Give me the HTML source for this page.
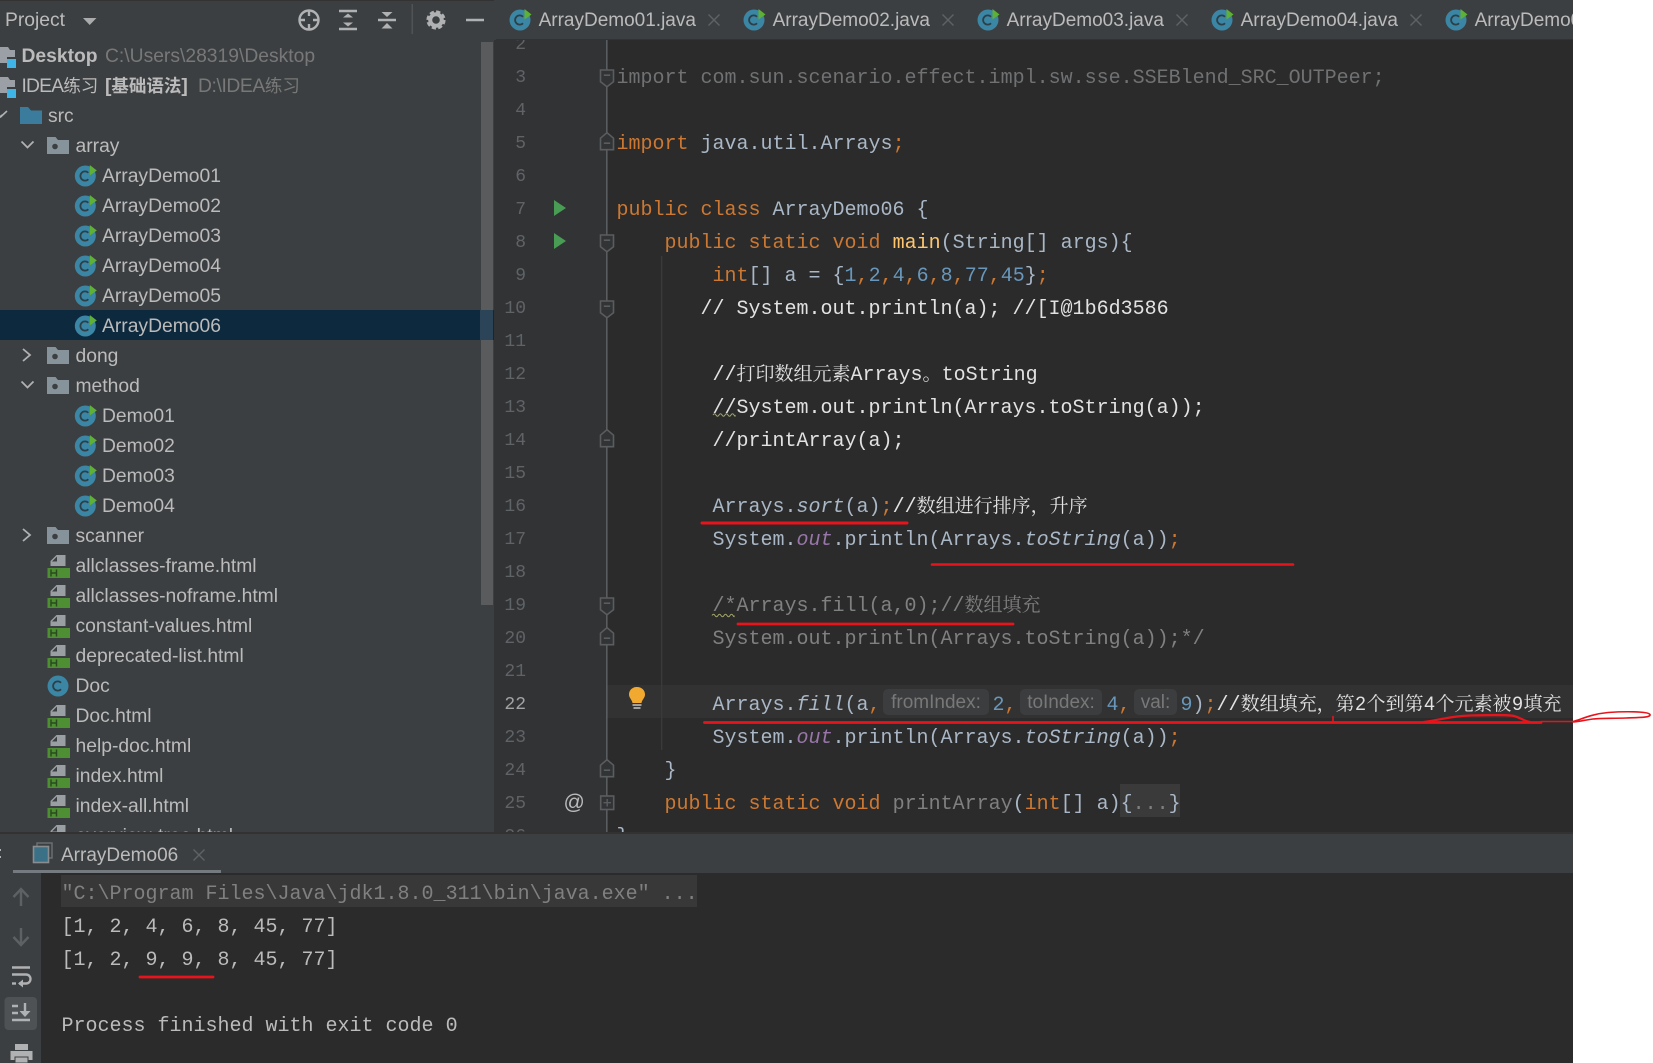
<!DOCTYPE html>
<html lang="zh">
<head>
<meta charset="utf-8">
<title>ArrayDemo06</title>
<style>
html,body{margin:0;padding:0;background:#fff;}
body{width:1653px;height:1063px;overflow:hidden;position:relative;font-family:"Liberation Sans","Noto Sans CJK SC",sans-serif;}
.abs{position:absolute;}
svg.abs{left:0;top:0;}
/* tree */
#tree{left:0;top:0;width:496px;height:832px;background:#3c3f41;overflow:hidden;position:absolute;}
.r{position:absolute;height:30px;line-height:30px;font-size:19.3px;color:#bbb;white-space:nowrap;margin-top:2px;}
.r b{font-weight:700;}
.r i{font-style:normal;color:#787878;}
.r u{text-decoration:none;font-size:17.5px;line-height:0;}
.sel{position:absolute;left:0;top:310px;width:494px;height:30px;background:#0d293e;}
/* tabs */
#tabbar{left:496px;top:0;width:1077px;height:39px;background:#3c3f41;overflow:hidden;position:absolute;border-bottom:1px solid #323232;}
.tab{position:absolute;top:0;height:40px;line-height:42px;font-size:19px;color:#bbb;white-space:nowrap;}
/* editor */
#editor{position:absolute;left:494px;top:40px;width:1079px;height:792px;background:#2b2b2b;}
#gutter{position:absolute;left:0;top:0;width:113px;height:792px;background:#313335;}
#caret{position:absolute;left:113px;top:645px;width:966px;height:33px;background:#323232;}
#code{position:absolute;left:0;top:0;width:1573px;height:1063px;clip-path:inset(40px 0 231px 0);font-family:"Liberation Mono","Noto Serif CJK SC",monospace;font-size:20px;}
.l{position:absolute;height:33px;line-height:33px;white-space:pre;color:#a9b7c6;margin-top:2px;}
.n{position:absolute;left:490px;width:36px;text-align:right;height:33px;line-height:33px;font-size:18px;color:#606366;margin-top:2px;}
.k{color:#cc7832}.o{color:#cc7832}.d{color:#6897bb}.m{color:#ffc66d}.v{color:#9876aa;font-style:italic}.it{font-style:italic}
.w{color:#e2e2e2}.g{color:#808080}.g2{color:#6f7173}
.cj{font-family:"Noto Serif CJK SC","Liberation Mono",serif;font-size:19px;line-height:0;}
.dg{font-family:"Liberation Sans",sans-serif;font-size:19px;line-height:0;padding:0 .7px;}
.h{position:absolute;top:689px;height:26px;line-height:27px;background:#3b3d3e;border-radius:5px;color:#787878;font-family:"Liberation Sans",sans-serif;font-size:19px;text-align:center;}
.fd{position:absolute;left:1120px;top:784px;width:60px;height:33px;background:#3a3a3a;}
/* bottom */
#bottom{position:absolute;left:0;top:832px;width:1573px;height:231px;background:#2b2b2b;}
#sep{position:absolute;left:0;top:0;width:1573px;height:2px;background:#323232;}
#rhead{position:absolute;left:0;top:2px;width:1573px;height:39px;background:#3c3f41;}
#rleft{position:absolute;left:0;top:41px;width:41px;height:190px;background:#3c3f41;}
.c{position:absolute;left:61.5px;height:33px;line-height:33px;font-family:"Liberation Mono",monospace;font-size:20px;white-space:pre;color:#bbb;margin-top:2px;}
</style>
</head>
<body>

<div id="tree">
  <div class="r" style="left:5px;top:4px">Project</div>
  <div class="r" style="left:21.5px;top:40px"><b>Desktop</b></div>
  <div class="r" style="left:105px;top:40px"><i>C:\Users\28319\Desktop</i></div>
  <div class="r" style="left:21.5px;top:70px"><span style="letter-spacing:-.8px">IDEA</span><u>练习</u></div>
  <div class="r" style="left:105px;top:70px"><b>[<u>基础语法</u>]</b></div>
  <div class="r" style="left:198px;top:70px"><i><span style="letter-spacing:-.4px">D:\IDEA</span><u>练习</u></i></div>
  <div class="r" style="left:48px;top:100px">src</div>
  <div class="r" style="left:75.5px;top:130px">array</div>
  <div class="sel"></div>
  <div class="r" style="left:102px;top:160px">ArrayDemo01</div>
  <div class="r" style="left:102px;top:190px">ArrayDemo02</div>
  <div class="r" style="left:102px;top:220px">ArrayDemo03</div>
  <div class="r" style="left:102px;top:250px">ArrayDemo04</div>
  <div class="r" style="left:102px;top:280px">ArrayDemo05</div>
  <div class="r" style="left:102px;top:310px">ArrayDemo06</div>
  <div class="r" style="left:75.5px;top:340px">dong</div>
  <div class="r" style="left:75.5px;top:370px">method</div>
  <div class="r" style="left:102px;top:400px">Demo01</div>
  <div class="r" style="left:102px;top:430px">Demo02</div>
  <div class="r" style="left:102px;top:460px">Demo03</div>
  <div class="r" style="left:102px;top:490px">Demo04</div>
  <div class="r" style="left:75.5px;top:520px">scanner</div>
  <div class="r" style="left:75.5px;top:550px">allclasses-frame.html</div>
  <div class="r" style="left:75.5px;top:580px">allclasses-noframe.html</div>
  <div class="r" style="left:75.5px;top:610px">constant-values.html</div>
  <div class="r" style="left:75.5px;top:640px">deprecated-list.html</div>
  <div class="r" style="left:75.5px;top:670px">Doc</div>
  <div class="r" style="left:75.5px;top:700px">Doc.html</div>
  <div class="r" style="left:75.5px;top:730px">help-doc.html</div>
  <div class="r" style="left:75.5px;top:760px">index.html</div>
  <div class="r" style="left:75.5px;top:790px">index-all.html</div>
  <div class="r" style="left:75.5px;top:820px">overview-tree.html</div>
</div>

<div id="editor"><div id="gutter"></div><div id="caret"></div></div>

<div id="tabbar">
  <div class="tab" style="left:42.6px">ArrayDemo01.java</div>
  <div class="tab" style="left:276.6px">ArrayDemo02.java</div>
  <div class="tab" style="left:510.6px">ArrayDemo03.java</div>
  <div class="tab" style="left:744.6px">ArrayDemo04.java</div>
  <div class="tab" style="left:978.6px">ArrayDemo05.java</div>
</div>

<div id="code">
  <div class="n" style="top:27px">2</div>
  <div class="n" style="top:60px">3</div>
  <div class="n" style="top:93px">4</div>
  <div class="n" style="top:126px">5</div>
  <div class="n" style="top:159px">6</div>
  <div class="n" style="top:192px">7</div>
  <div class="n" style="top:225px">8</div>
  <div class="n" style="top:258px">9</div>
  <div class="n" style="top:291px">10</div>
  <div class="n" style="top:324px">11</div>
  <div class="n" style="top:357px">12</div>
  <div class="n" style="top:390px">13</div>
  <div class="n" style="top:423px">14</div>
  <div class="n" style="top:456px">15</div>
  <div class="n" style="top:489px">16</div>
  <div class="n" style="top:522px">17</div>
  <div class="n" style="top:555px">18</div>
  <div class="n" style="top:588px">19</div>
  <div class="n" style="top:621px">20</div>
  <div class="n" style="top:654px">21</div>
  <div class="n" style="top:687px;color:#a4a3a3">22</div>
  <div class="n" style="top:720px">23</div>
  <div class="n" style="top:753px">24</div>
  <div class="n" style="top:786px">25</div>
  <div class="n" style="top:819px">26</div>

  <div class="fd"></div>
  <div class="h" style="left:883px;width:106px">fromIndex:</div>
  <div class="h" style="left:1020px;width:82px">toIndex:</div>
  <div class="h" style="left:1134px;width:43px">val:</div>

  <div class="l g2" style="left:616.5px;top:60px">import com.sun.scenario.effect.impl.sw.sse.SSEBlend_SRC_OUTPeer;</div>
  <div class="l" style="left:616.5px;top:126px"><span class="k">import</span> java.util.Arrays<span class="o">;</span></div>
  <div class="l" style="left:616.5px;top:192px"><span class="k">public class</span> ArrayDemo06 {</div>
  <div class="l" style="left:664.5px;top:225px"><span class="k">public static void</span> <span class="m">main</span>(String[] args){</div>
  <div class="l" style="left:712.5px;top:258px"><span class="k">int</span>[] a = {<span class="d">1</span><span class="o">,</span><span class="d">2</span><span class="o">,</span><span class="d">4</span><span class="o">,</span><span class="d">6</span><span class="o">,</span><span class="d">8</span><span class="o">,</span><span class="d">77</span><span class="o">,</span><span class="d">45</span>}<span class="o">;</span></div>
  <div class="l w" style="left:700.5px;top:291px">// System.out.println(a); //[I@1b6d3586</div>
  <div class="l w" style="left:712.5px;top:357px">//<span class="cj">打印数组元素</span>Arrays<span class="cj">。</span>toString</div>
  <div class="l w" style="left:712.5px;top:390px">//System.out.println(Arrays.toString(a));</div>
  <div class="l w" style="left:712.5px;top:423px">//printArray(a);</div>
  <div class="l" style="left:712.5px;top:489px">Arrays.<span class="it">sort</span>(a)<span class="o">;</span><span class="w">//<span class="cj">数组进行排序，升序</span></span></div>
  <div class="l" style="left:712.5px;top:522px">System.<span class="v">out</span>.println(Arrays.<span class="it">toString</span>(a))<span class="o">;</span></div>
  <div class="l g" style="left:712.5px;top:588px">/*Arrays.fill(a,0);//<span class="cj">数组填充</span></div>
  <div class="l g" style="left:712.5px;top:621px">System.out.println(Arrays.toString(a));*/</div>
  <div class="l" style="left:712.5px;top:687px">Arrays.<span class="it">fill</span>(a<span class="o">,</span></div>
  <div class="l" style="left:992.5px;top:687px"><span class="d">2</span><span class="o">,</span></div>
  <div class="l" style="left:1106.5px;top:687px"><span class="d">4</span><span class="o">,</span></div>
  <div class="l" style="left:1180.5px;top:687px"><span class="d">9</span>)<span class="o">;</span><span class="w">//<span class="cj">数组填充，第<span class="dg">2</span>个到第<span class="dg">4</span>个元素被<span class="dg">9</span>填充</span></span></div>
  <div class="l" style="left:712.5px;top:720px">System.<span class="v">out</span>.println(Arrays.<span class="it">toString</span>(a))<span class="o">;</span></div>
  <div class="l" style="left:664.5px;top:753px">}</div>
  <div class="l" style="left:664.5px;top:786px"><span class="k">public static void</span> <span class="g">printArray</span>(<span class="k">int</span>[] a){<span class="g">...</span>}</div>
  <div class="l" style="left:616.5px;top:819px">}</div>
</div>

<svg class="abs" width="1653" height="1063" viewBox="0 0 1653 1063" style="position:absolute">
  <defs>
    <g id="cls">
      <circle r="10.5" fill="#3b86a5"/>
      <path d="M3 -3.2A4.6 4.6 0 1 0 3 3.2" fill="none" stroke="#2d3f47" stroke-width="1.8"/>
    </g>
    <g id="run">
      <path d="M4.5 -11L11.5 -5.5L4.5 -0.5Z" fill="#5fb135"/>
    </g>
    <g id="pkg">
      <path d="M0 -8.5H8.5L11 -5.5H22V8.5H0Z" fill="#87939a"/>
      <circle cx="8" cy="1" r="2.8" fill="#3c3f41"/>
    </g>
    <g id="htm">
      <path d="M3 1V-4L9 -10H18V1Z" fill="#9a9fa3"/>
      <path d="M4.5 -3.5L9.5 -8.5V-3.5Z" fill="#3c3f41"/>
      <rect x="0" y="3" width="22.5" height="10" fill="#4f8f33"/>
      <path d="M3.5 4.5V11.5M9 4.5V11.5M3.5 8H9" stroke="#2a4a1f" stroke-width="1.5" fill="none"/>
    </g>
    <g id="fs">
      <path d="M-6.5 -6.7H6.5V5L0 10L-6.5 5Z" fill="#313335" stroke="#5a5d5f" stroke-width="1.6"/>
      <path d="M-3.2 -1.5H3.2" stroke="#5a5d5f" stroke-width="1.6"/>
    </g>
    <g id="fe">
      <path d="M-6.5 7H6.5V-4.5L0 -10L-6.5 -4.5Z" fill="#313335" stroke="#5a5d5f" stroke-width="1.6"/>
      <path d="M-3.2 0.5H3.2" stroke="#5a5d5f" stroke-width="1.6"/>
    </g>
    <path id="x" d="M-5.5 -5.5L5.5 5.5M5.5 -5.5L-5.5 5.5" stroke="#5f6264" stroke-width="1.4" fill="none"/>
  </defs>

  <!-- tree scrollbar -->
  <rect x="481" y="42" width="12" height="563" fill="#595b5d"/>
  <rect x="480" y="310" width="13" height="30" fill="#2c4457"/>

  <!-- header icons -->
  <rect x="0" y="0" width="494" height="1" fill="#333"/>
  <path d="M83 18H96.5L89.7 25Z" fill="#a9abad"/>
  <g fill="none" stroke="#afb1b3" stroke-width="2.4">
    <circle cx="309" cy="20" r="9.5"/>
    <path d="M309 10V16M309 24V30M299 20H305M313 20H319"/>
    <path d="M339 11H357M339 29H357M378 20H396" stroke-width="2.6"/>
    <path d="M466 20H484" stroke-width="2.6"/>
  </g>
  <path d="M348 13.5L353 17.5H343ZM348 26.5L353 22.5H343ZM387 17L381.5 12H392.5ZM387 23L392.5 28.5H381.5Z" fill="#afb1b3"/>
  <rect x="411.5" y="4" width="1.5" height="30" fill="#505254"/>
  <circle cx="436" cy="20" r="5.8" fill="none" stroke="#afb1b3" stroke-width="4"/>
  <circle cx="436" cy="20" r="8.3" fill="none" stroke="#afb1b3" stroke-width="2.6" stroke-dasharray="4.2 2.3"/>

  <!-- project icons -->
  <path d="M0 47H8L10 50H15V57H7V63H0Z" fill="#9aa0a5"/><rect x="7" y="59" width="9" height="9" fill="#3fb4e6"/>
  <path d="M0 77H8L10 80H15V87H7V93H0Z" fill="#9aa0a5"/><rect x="7" y="89" width="9" height="9" fill="#3fb4e6"/>
  <path d="M0 117L2 115M0 117.5L7 111" stroke="#afb1b3" stroke-width="1.6" fill="none"/>
  <path d="M20 107H28L31 110.5H42V124H20Z" fill="#3b7c9d"/>
  <g fill="none" stroke="#afb1b3" stroke-width="1.8">
    <path d="M21.5 141.5L27.5 147.5L33.5 141.5"/>
    <path d="M23 349L30 355L23 361"/>
    <path d="M21.5 381.5L27.5 387.5L33.5 381.5"/>
    <path d="M23 529L30 535L23 541"/>
  </g>
  <use href="#pkg" x="47" y="145.5"/>
  <use href="#pkg" x="47" y="355.5"/>
  <use href="#pkg" x="47" y="385.5"/>
  <use href="#pkg" x="47" y="535.5"/>

  <use href="#cls" x="85.3" y="176"/><use href="#run" x="85.3" y="176"/>
  <use href="#cls" x="85.3" y="206"/><use href="#run" x="85.3" y="206"/>
  <use href="#cls" x="85.3" y="236"/><use href="#run" x="85.3" y="236"/>
  <use href="#cls" x="85.3" y="266"/><use href="#run" x="85.3" y="266"/>
  <use href="#cls" x="85.3" y="296"/><use href="#run" x="85.3" y="296"/>
  <use href="#cls" x="85.3" y="326"/><use href="#run" x="85.3" y="326"/>
  <use href="#cls" x="85.3" y="416"/><use href="#run" x="85.3" y="416"/>
  <use href="#cls" x="85.3" y="446"/><use href="#run" x="85.3" y="446"/>
  <use href="#cls" x="85.3" y="476"/><use href="#run" x="85.3" y="476"/>
  <use href="#cls" x="85.3" y="506"/><use href="#run" x="85.3" y="506"/>
  <use href="#cls" x="58" y="686"/>
  <use href="#htm" x="47.5" y="565"/>
  <use href="#htm" x="47.5" y="595"/>
  <use href="#htm" x="47.5" y="625"/>
  <use href="#htm" x="47.5" y="655"/>
  <use href="#htm" x="47.5" y="715"/>
  <use href="#htm" x="47.5" y="745"/>
  <use href="#htm" x="47.5" y="775"/>
  <use href="#htm" x="47.5" y="805"/>
  <use href="#htm" x="47.5" y="835"/>

  <!-- tab icons -->
  <use href="#cls" x="520" y="20"/><use href="#run" x="520" y="20"/><use href="#x" x="714" y="20"/>
  <use href="#cls" x="754" y="20"/><use href="#run" x="754" y="20"/><use href="#x" x="948" y="20"/>
  <use href="#cls" x="988" y="20"/><use href="#run" x="988" y="20"/><use href="#x" x="1182" y="20"/>
  <use href="#cls" x="1222" y="20"/><use href="#run" x="1222" y="20"/><use href="#x" x="1416" y="20"/>
  <use href="#cls" x="1456" y="20"/><use href="#run" x="1456" y="20"/>

  <!-- gutter -->
  <rect x="606" y="40" width="1.6" height="792" fill="#5a5d5f"/>
  <rect x="661" y="256" width="1.4" height="494" fill="#3a3a3a"/>
  <use href="#fs" x="607" y="76.7"/>
  <use href="#fe" x="607" y="142.7"/>
  <use href="#fs" x="607" y="241.7"/>
  <use href="#fs" x="607" y="307.7"/>
  <use href="#fe" x="607" y="439.7"/>
  <use href="#fs" x="607" y="604.7"/>
  <use href="#fe" x="607" y="637.7"/>
  <use href="#fe" x="607" y="769.7"/>
  <rect x="600.7" y="796" width="13" height="13.5" fill="#313335" stroke="#5a5d5f" stroke-width="1.6"/>
  <path d="M603.5 802.7H611M607.2 799V806.5" stroke="#5a5d5f" stroke-width="1.4"/>
  <path d="M554 200L566 208L554 216Z" fill="#499c54"/>
  <path d="M554 233L566 241L554 249Z" fill="#499c54"/>
  <text x="563.5" y="809" font-family="Liberation Sans, sans-serif" font-size="21" fill="#bbb">@</text>
  <path d="M637 687C632 687 629 690.5 629 694.5C629 698 632 699.5 632.5 703H641.5C642 699.5 645 698 645 694.5C645 690.5 642 687 637 687Z" fill="#f2a92f"/>
  <path d="M632.5 705H641.5M633.5 708H640.5" stroke="#c4c4c4" stroke-width="1.5"/>
  <path d="M713 415q1.5 -2.5 3 0t3 0t3 0t3 0t3 0t3 0t3 0t1 0" fill="none" stroke="#a6a869" stroke-width="1"/>
  <path d="M712 615.5q1.5 -2.5 3 0t3 0t3 0t3 0t3 0t3 0t3 0t1 0" fill="none" stroke="#a6a869" stroke-width="1"/>
</svg>

<div id="bottom">
  <div id="sep"></div>
  <div id="rhead"></div>
  <div id="rleft"></div>
  <div style="position:absolute;left:61px;top:3px;height:39px;line-height:41px;font-size:19px;color:#bbb;white-space:nowrap">ArrayDemo06</div>
  <div style="position:absolute;left:13px;top:38px;width:208px;height:3px;background:#747a80"></div>
  <div style="position:absolute;left:61px;top:43px;width:636px;height:32px;background:#383838"></div>
  <div class="c" style="top:43.5px;color:#808080">"C:\Program Files\Java\jdk1.8.0_311\bin\java.exe" ...</div>
  <div class="c" style="top:77px">[1, 2, 4, 6, 8, 45, 77]</div>
  <div class="c" style="top:110px">[1, 2, 9, 9, 8, 45, 77]</div>
  <div class="c" style="top:176px">Process finished with exit code 0</div>
</div>

<svg class="abs" width="1653" height="1063" viewBox="0 0 1653 1063" style="position:absolute">
  <!-- run panel icons -->
  <path d="M0 849V851M0 856V858" stroke="#afb1b3" stroke-width="2"/>
  <rect x="37" y="843" width="15" height="15" fill="none" stroke="#6e7173" stroke-width="1.4"/>
  <rect x="33.5" y="846.5" width="15" height="16" fill="#3a7187" stroke="#8a8d8f" stroke-width="1.6"/>
  <use href="#x" x="199" y="855"/>
  <g fill="none" stroke="#5e6164" stroke-width="2.4">
    <path d="M21 906V890M13.5 897L21 889L28.5 897"/>
    <path d="M21 928V944M13.5 937L21 945L28.5 937"/>
  </g>
  <g fill="none" stroke="#afb1b3" stroke-width="2.4">
    <path d="M12 967.5H30M12 974.5H26C32 974.5 32 983.5 26 983.5H19"/>
    <path d="M12 983.5H16"/>
  </g>
  <path d="M23 979.5V987.5L18 983.5Z" fill="#afb1b3"/>
  <rect x="4.5" y="997" width="32.5" height="33" rx="4" fill="#4e5254"/>
  <g fill="none" stroke="#afb1b3" stroke-width="2.4">
    <path d="M12 1006H18M12 1013H18M12 1020H30"/>
    <path d="M25 1003V1015"/>
  </g>
  <path d="M19.5 1011H30.5L25 1017Z" fill="#afb1b3"/>
  <rect x="15" y="1044" width="13" height="6" fill="#afb1b3"/>
  <rect x="10.5" y="1051" width="22" height="9" fill="#afb1b3"/>
  <rect x="15" y="1057" width="13" height="6" fill="#afb1b3" stroke="#3c3f41"/>

  <!-- red annotations -->
  <g fill="none" stroke="#e8141c" stroke-linecap="round">
    <path d="M702 523H907" stroke-width="3"/>
    <path d="M932 564.5H1293" stroke-width="2.6"/>
    <path d="M738 624H1013" stroke-width="2.8"/>
    <path d="M704.5 722.5H1541" stroke-width="2.8"/>
    <path d="M1333 716.5V721.5" stroke-width="1.6"/>
    <path d="M1424 722C1444 719 1452 716 1470 715.5C1490 715 1508 714.5 1514 716C1520 717.5 1524 721 1530 722" stroke-width="2.2"/>
    <path d="M1541 721.5H1573C1582 719 1592 714 1608 712.5C1622 711.5 1648 711 1650 714.5C1651 717.5 1640 717.5 1626 718C1612 718.5 1600 718 1593 719C1585 720 1580 721.5 1573 722" stroke-width="1.6"/>
    <path d="M140 977H213" stroke-width="2.8"/>
  </g>
</svg>

</body>
</html>
